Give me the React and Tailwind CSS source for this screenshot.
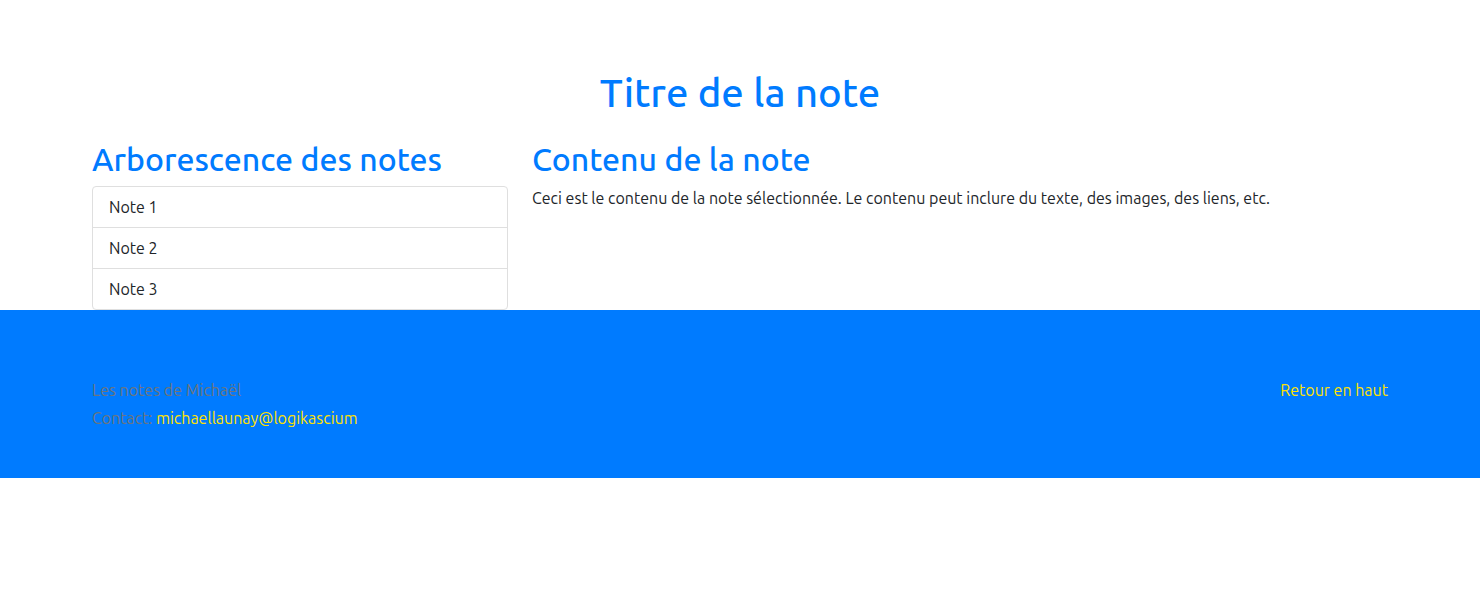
const notes = ["Note 1", "Note 2", "Note 3"];

export default function App() {
  return (
    <div className="bg-white pt-16 font-['Ubuntu','Open_Sans','Noto_Sans',sans-serif] text-base leading-6 font-normal text-[#212529]">
      <main className="mx-auto max-w-[1320px] px-3">
        <h1 className="mt-[5px] mb-[19px] text-center text-[40px] leading-12 font-medium text-[#007bff]">Titre de la note</h1>
        <div className="grid grid-cols-3 gap-6">
          <section>
            <h2 className="mt-1 mb-2 text-[32px] leading-[38px] font-medium whitespace-nowrap text-[#007bff]">Arborescence des notes</h2>
            <ul className="divide-y divide-[#dfdfdf] rounded border border-[#dfdfdf] bg-white">
              {notes.map((note) => (
                <li key={note} className="px-4 py-2">{note}</li>
              ))}
            </ul>
          </section>
          <section className="col-span-2">
            <h2 className="mt-1 mb-2 text-[32px] leading-[38px] font-medium text-[#007bff]">Contenu de la note</h2>
            <p>Ceci est le contenu de la note sélectionnée. Le contenu peut inclure du texte, des images, des liens, etc.</p>
          </section>
        </div>
      </main>
      <footer className="bg-[#007bff] pt-[68px] pb-12 text-[#6c757d]">
        <div className="mx-auto flex max-w-[1320px] justify-between px-3">
          <div className="space-y-1">
            <p>Les notes de Michaël</p>
            <p>Contact: <a href="mailto:michaellaunay@logikascium" className="text-[#ffe100]">michaellaunay@logikascium</a></p>
          </div>
          <a href="#" className="text-[#ffe100]">Retour en haut</a>
        </div>
      </footer>
    </div>
  );
}
